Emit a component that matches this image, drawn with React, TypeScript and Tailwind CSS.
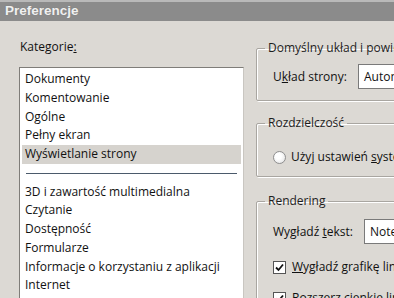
import React from "react";

const font = { fontFamily: '"Open Sans", "Noto Sans", sans-serif' };

const before = ["Dokumenty", "Komentowanie", "Ogólne", "Pełny ekran", "Wyświetlanie strony"];
const after = [
  "3D i zawartość multimedialna",
  "Czytanie",
  "Dostępność",
  "Formularze",
  "Informacje o korzystaniu z aplikacji",
  "Internet",
  "JavaScript",
];

function GroupBox({ title, children, className = "" }: { title: string; children?: React.ReactNode; className?: string }) {
  return (
    <fieldset
      className={`border border-[#a9a6a1] shadow-[inset_1px_1px_0_#ffffff,1px_1px_0_#ffffff] rounded-[2px] pl-4 pr-2 ${className}`}
    >
      <legend className="px-[3px] ml-[-8px] text-[12px] leading-[16px] text-[#1e1e1e]">{title}</legend>
      {children}
    </fieldset>
  );
}

function Check() {
  return (
    <span className="w-[13px] h-[13px] border border-[#555] bg-white flex items-center justify-center shrink-0">
      <svg width="9" height="9" viewBox="0 0 9 9">
        <path d="M1 4.5 L3.5 7 L8 1.5" stroke="#111" strokeWidth="1.8" fill="none" />
      </svg>
    </span>
  );
}

export default function App() {
  return (
    <div className="w-[394px] h-[298px] overflow-hidden bg-[#dcd9d4] text-[#111]" style={font}>
      <div className="h-[21px] bg-[#8b8b8b] border-t-2 border-[#b9b9b9] flex items-center pl-[5px]">
        <span
          className="text-[13.5px] font-bold text-[#f0f0f0] [text-shadow:0_0_1px_#777]"
          style={{ fontFamily: '"Liberation Sans", Arial, sans-serif' }}
        >
          Preferencje
        </span>
      </div>

      <div className="flex">
        <div className="w-[244px] shrink-0 pl-[19px]">
          <div className="mt-[17px] h-[18px] text-[12px] leading-[18px] pl-px">
            Kategorie<span className="underline">:</span>
          </div>
          <div className="mt-[11px] h-[240px] bg-white border border-[#7f7d79] border-r-[#c9c6c1] border-b-0 px-[2px] pt-[2px] text-[12px]">
            {before.map((t, i) => (
              <div
                key={t}
                className={`h-[18.75px] leading-[18.75px] pl-[3px] whitespace-nowrap ${i === 4 ? "bg-[#d6d3ce]" : ""}`}
              >
                {t}
              </div>
            ))}
            <div className="h-[18.75px] flex items-center px-[4px]">
              <div className="h-px w-full bg-[#4b5a6b]" />
            </div>
            {after.map((t) => (
              <div key={t} className="h-[18.75px] leading-[18.75px] pl-[3px] whitespace-nowrap">
                {t}
              </div>
            ))}
          </div>
        </div>

        <div className="ml-[12px] w-[300px] shrink-0 pt-[19px] flex flex-col text-[12px]">
          <GroupBox title="Domyślny układ i powiększenie" className="h-[61px]">
            <div className="flex items-center mt-[8px]">
              <span className="w-[85px] shrink-0">
                U<span className="underline">k</span>ład strony:
              </span>
              <div className="h-[25px] w-[120px] bg-white border border-[#7a7a7a] flex items-center pl-[5px]">
                Automatycznie
              </div>
            </div>
          </GroupBox>

          <GroupBox title="Rozdzielczość" className="h-[62px] mt-[14px]">
            <div className="flex items-center gap-[5px] mt-[17px]">
              <span className="w-[13px] h-[13px] rounded-full border border-[#8f8f8f] bg-[radial-gradient(circle_at_40%_40%,#ffffff_30%,#dcdcdc_100%)]" />
              <span>
                Użyj ustawień <span className="underline">s</span>ystemowych
              </span>
            </div>
          </GroupBox>

          <GroupBox title="Rendering" className="h-[120px] mt-[16px]">
            <div className="flex items-center mt-[10px]">
              <span className="w-[91px] shrink-0">
                Wygładź <span className="underline">t</span>ekst:
              </span>
              <div className="h-[25px] w-[120px] bg-white border border-[#7a7a7a] flex items-center pl-[5px]">
                Notebook
              </div>
            </div>
            <div className="flex items-center gap-[6px] mt-[14px]">
              <Check />
              <span>
                <span className="underline">W</span>ygładź grafikę liniową
              </span>
            </div>
            <div className="flex items-center gap-[6px] mt-[13px]">
              <Check />
              <span>
                <span className="underline">R</span>ozszerz cienkie linie
              </span>
            </div>
          </GroupBox>
        </div>
      </div>
    </div>
  );
}
